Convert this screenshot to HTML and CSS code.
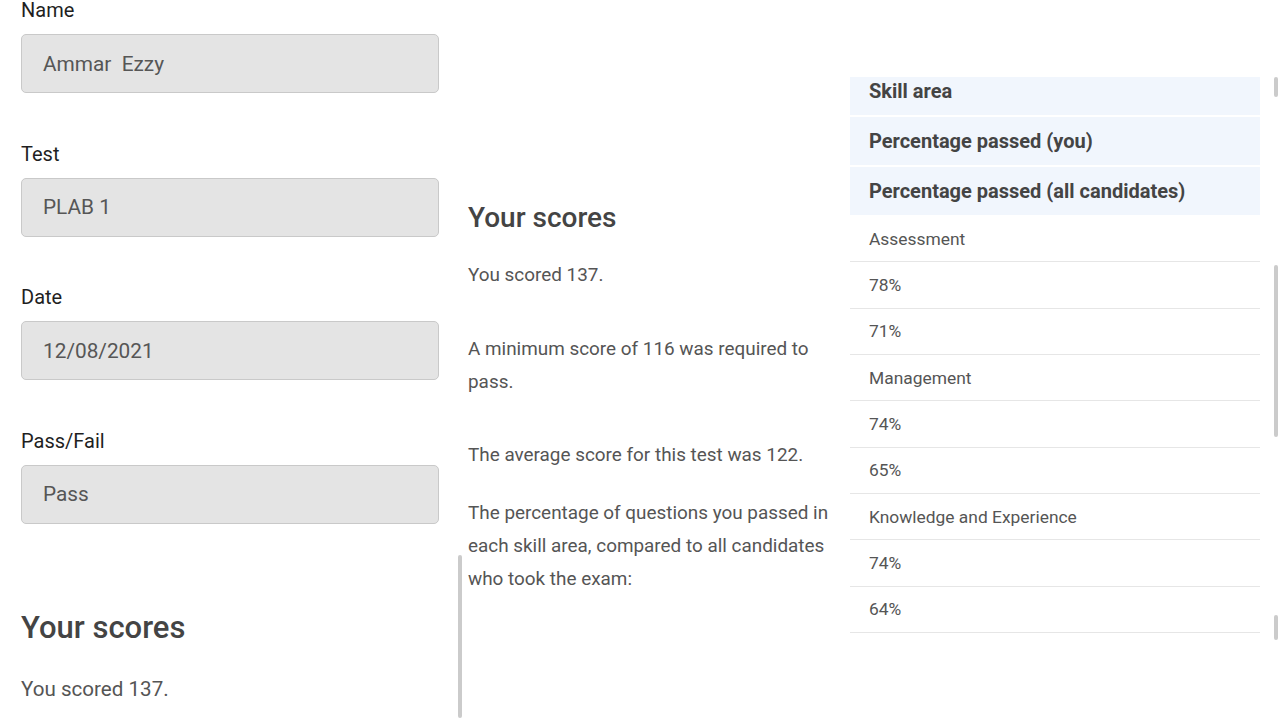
FILE: index.html
```html
<!DOCTYPE html>
<html lang="en">
<head>
<meta charset="utf-8">
<title>Test result</title>
<link rel="stylesheet" href="styles.css">
</head>
<body>
<div class="page">
  <section class="panel panel-details">
    <div class="field">
      <label class="field-label">Name</label>
      <div class="field-box">Ammar&nbsp; Ezzy</div>
    </div>
    <div class="field">
      <label class="field-label">Test</label>
      <div class="field-box">PLAB 1</div>
    </div>
    <div class="field">
      <label class="field-label">Date</label>
      <div class="field-box">12/08/2021</div>
    </div>
    <div class="field">
      <label class="field-label">Pass/Fail</label>
      <div class="field-box">Pass</div>
    </div>
    <h2 class="details-heading">Your scores</h2>
    <p class="details-text">You scored 137.</p>
    <span class="scrollbar scrollbar-left"></span>
  </section>

  <section class="panel panel-scores">
    <h2 class="scores-heading">Your scores</h2>
    <p class="scores-text p1">You scored 137.</p>
    <p class="scores-text p2">A minimum score of 116 was required to pass.</p>
    <p class="scores-text p3">The average score for this test was 122.</p>
    <p class="scores-text p4">The percentage of questions you passed in each skill area, compared to all candidates who took the exam:</p>
  </section>

  <section class="panel panel-table">
    <div class="table">
      <div class="th first">Skill area</div>
      <div class="th">Percentage passed (you)</div>
      <div class="th last">Percentage passed (all candidates)</div>
      <div class="td">Assessment</div>
      <div class="td">78%</div>
      <div class="td">71%</div>
      <div class="td">Management</div>
      <div class="td">74%</div>
      <div class="td">65%</div>
      <div class="td">Knowledge and Experience</div>
      <div class="td">74%</div>
      <div class="td">64%</div>
    </div>
  </section>

  <span class="scrollbar scrollbar-r1"></span>
  <span class="scrollbar scrollbar-r2"></span>
  <span class="scrollbar scrollbar-r3"></span>
</div>
</body>
</html>
```

FILE: styles.css
```css
* { box-sizing: border-box; }

html, body {
  margin: 0;
  padding: 0;
  background: #ffffff;
}

body {
  font-family: Roboto, "Noto Sans", "Liberation Sans", sans-serif;
  width: 1280px;
  height: 720px;
  overflow: hidden;
}

.page {
  position: relative;
  display: flex;
  width: 1280px;
  height: 720px;
}

.panel {
  flex: none;
}

/* ---------- left panel ---------- */
.panel-details {
  position: relative;
  width: 460px;
  padding: 0 21px;
}

.field {
  margin-bottom: 48.5px;
}

.field:first-child {
  margin-top: -2px;
}

.field-label {
  display: block;
  font-size: 20px;
  line-height: 24px;
  color: #1f1f1f;
  margin-bottom: 12px;
}

.field-box {
  height: 59px;
  display: flex;
  align-items: center;
  padding-left: 21px;
  background: #e4e4e4;
  border: 1px solid #c9c9c9;
  border-radius: 5px;
  font-size: 20.8px;
  color: #565656;
}

.field:last-of-type {
  margin-bottom: 0;
}

.details-heading {
  margin: 86px 0 0;
  font-size: 31px;
  line-height: 36px;
  font-weight: 500;
  color: #444444;
}

.details-text {
  margin: 29px 0 0;
  font-size: 20.6px;
  line-height: 28px;
  color: #555555;
}

.scrollbar {
  position: absolute;
  width: 4px;
  background: #cbcbcb;
  border-radius: 2px;
}

.scrollbar-left {
  left: 458px;
  top: 555px;
  height: 163px;
}

/* ---------- middle panel ---------- */
.panel-scores {
  width: 390px;
  padding-left: 8px;
  padding-right: 6px;
  padding-top: 202px;
}

.scores-heading {
  margin: 0;
  font-size: 28px;
  line-height: 32px;
  font-weight: 500;
  color: #444444;
}

.scores-text {
  margin: 0;
  font-size: 18.9px;
  line-height: 33px;
  color: #555555;
}

.scores-text.p1 { margin-top: 24px; }
.scores-text.p2 { margin-top: 41px; }
.scores-text.p3 { margin-top: 40px; }
.scores-text.p4 { margin-top: 25px; }

/* ---------- right panel ---------- */
.panel-table {
  width: 410px;
  padding-top: 77px;
}

.table {
  overflow: hidden;
  height: 560px;
}

.th {
  height: 48px;
  display: flex;
  align-items: center;
  padding-left: 19px;
  background: #f1f6fd;
  font-size: 20px;
  font-weight: 700;
  color: #444444;
  margin-bottom: 2px;
}

.th.first {
  margin-top: -10px;
}

.th.last {
  margin-bottom: 1px;
}

.td {
  height: 46.35px;
  display: flex;
  align-items: center;
  padding-left: 19px;
  border-bottom: 1px solid #e6e6e6;
  font-size: 17.4px;
  color: #555555;
}

.scrollbar-r1 {
  left: 1274px;
  top: 77px;
  height: 20px;
}

.scrollbar-r2 {
  left: 1274px;
  top: 265px;
  height: 172px;
}

.scrollbar-r3 {
  left: 1274px;
  top: 615px;
  height: 25px;
}
```
